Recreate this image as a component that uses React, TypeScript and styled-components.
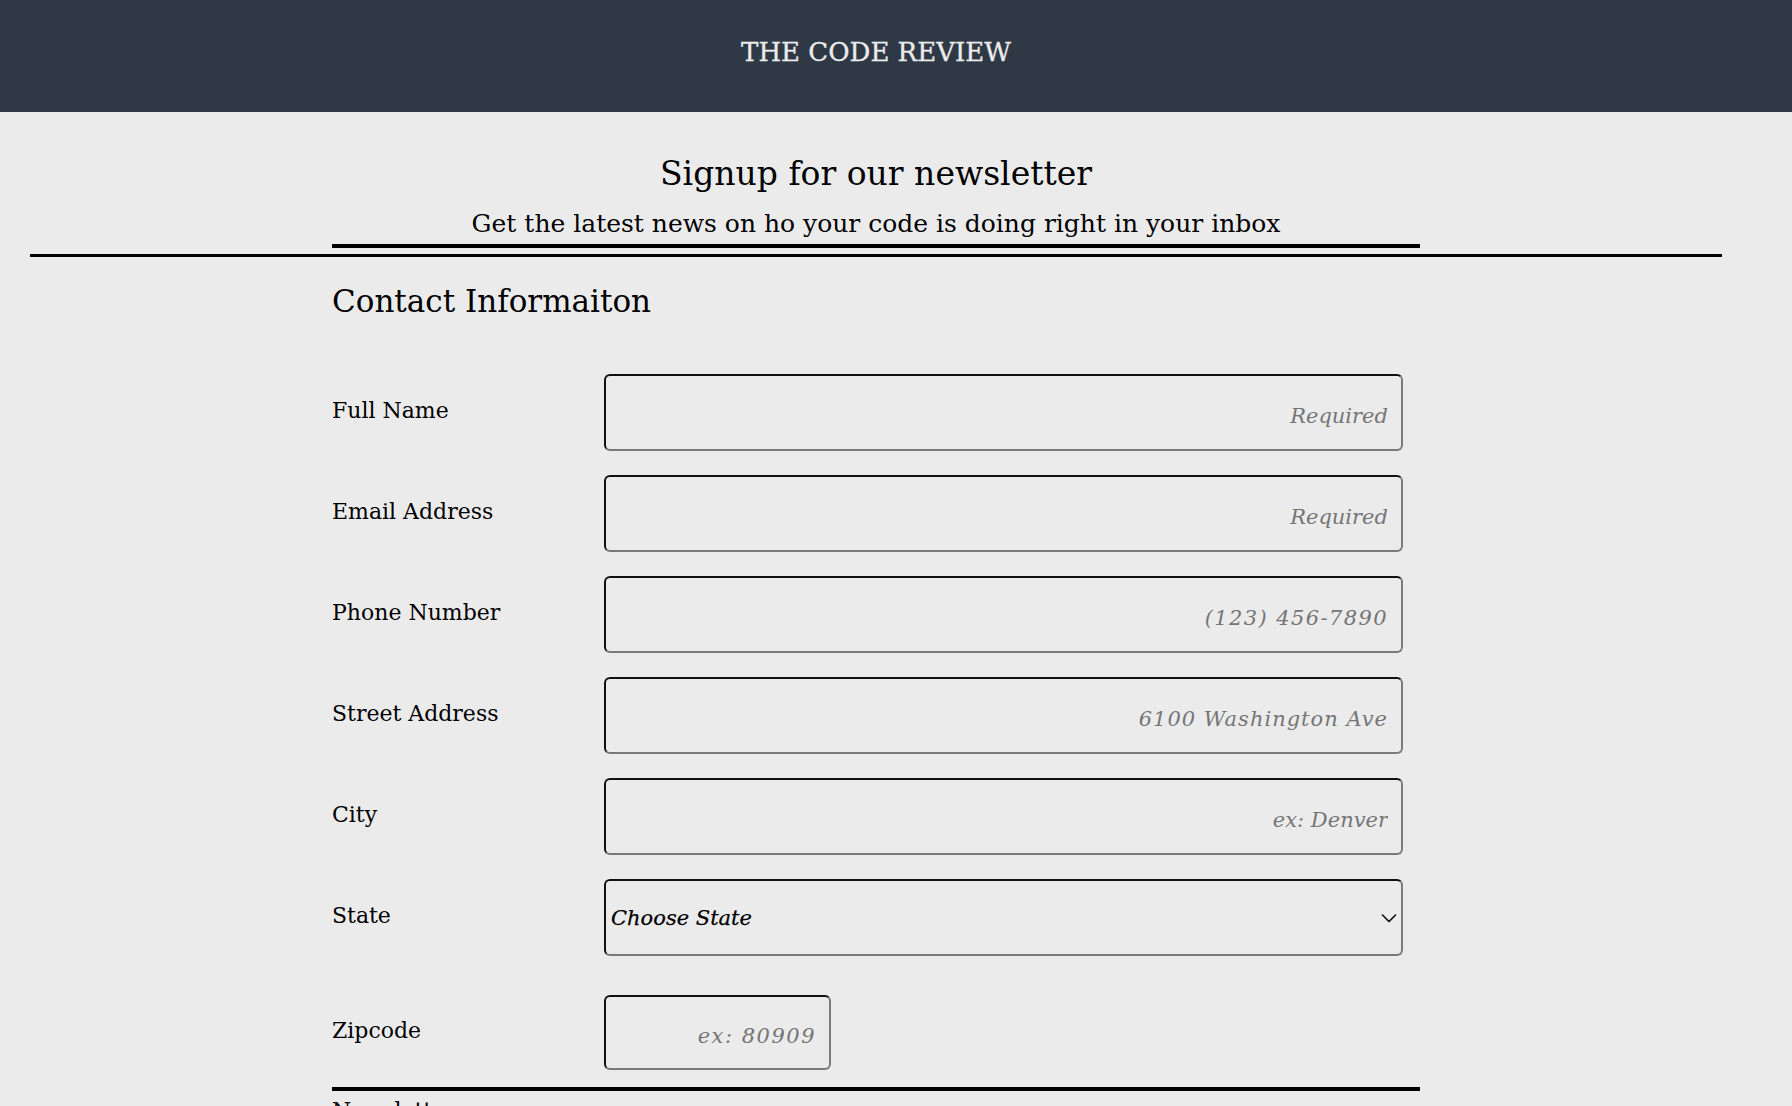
import React from "react";
import styled, { createGlobalStyle } from "styled-components";

const GlobalStyle = createGlobalStyle`
  html, body { margin: 0; padding: 0; background: #ecebec; }
  body { font-family: "DejaVu Serif", "Liberation Serif", serif; color: #000; }
  * { box-sizing: border-box; }
`;

const Header = styled.header`
  height: 112px;
  background: #2f3945;
  padding: 37px 40px 0 0;
  text-align: center;
`;

const SiteTitle = styled.h1`
  margin: 0;
  font-size: 26px;
  line-height: 30px;
  font-weight: normal;
  color: #ececec;
  -webkit-text-stroke: 0.3px #ececec;
`;

const Main = styled.main`
  display: flex;
  flex-direction: column;
  align-items: center;
  padding-right: 40px;
`;

const Intro = styled.section`
  width: 1088px;
  padding: 42px 0 6px;
  border-bottom: 4px solid #000;
  text-align: center;
`;

const Heading = styled.h2`
  margin: 0;
  font-size: 33px;
  line-height: 40px;
  font-weight: normal;
`;

const Subtitle = styled.p`
  margin: 16px 0 0;
  font-size: 25px;
  line-height: 28px;
`;

const Divider = styled.hr`
  width: 1692px;
  height: 3px;
  margin: 6px 0 0;
  border: 0;
  background: #000;
`;

const Form = styled.form`
  width: 1088px;
`;

const SectionTitle = styled.h3`
  margin: 26px 0 0;
  font-size: 31px;
  line-height: 36px;
  font-weight: normal;
`;

const Fields = styled.div`
  display: flex;
  flex-direction: column;
  gap: 24px;
  margin-top: 55px;
`;

const Row = styled.div<{ $short?: boolean }>`
  display: grid;
  grid-template-columns: 272px 1fr;
  align-items: center;
  height: ${(p) => (p.$short ? "75px" : "77px")};
  margin-top: ${(p) => (p.$short ? "15px" : "0")};
`;

const Label = styled.label`
  font-size: 22px;
  line-height: 26px;
  padding-bottom: 4px;
`;

const boxBorder = `
  border: 2px solid;
  border-color: #111 #7a7a7a #7a7a7a #111;
  border-radius: 6px;
  background: transparent;
  font-family: "DejaVu Serif", "Liberation Serif", serif;
  font-style: italic;
  font-size: 21px;
  outline: none;
`;

const Input = styled.input<{ $width?: number; $spacing?: number }>`
  ${boxBorder}
  width: ${(p) => (p.$width ? `${p.$width}px` : "799px")};
  height: 100%;
  padding: 6px 13px 0;
  text-align: right;
  color: #000;
  letter-spacing: ${(p) => p.$spacing ?? 0}px;
  &::placeholder {
    color: #757575;
    opacity: 1;
  }
`;

const SelectWrap = styled.div`
  position: relative;
  width: 799px;
  height: 100%;
`;

const Select = styled.select`
  ${boxBorder}
  appearance: none;
  -webkit-appearance: none;
  width: 100%;
  height: 100%;
  padding: 0 30px 0 5px;
  color: #000;
  -webkit-text-stroke: 0.25px #000;
`;

const Chevron = styled.svg`
  position: absolute;
  right: 6px;
  top: 50%;
  transform: translateY(-50%);
  pointer-events: none;
`;

const FormRule = styled.div`
  height: 4px;
  margin-top: 17px;
  background: #000;
`;

const SubSection = styled.h4`
  margin: 7px 0 0;
  font-size: 22px;
  line-height: 26px;
  font-weight: normal;
`;

const fields = [
  { id: "name", label: "Full Name", placeholder: "Required", spacing: 0 },
  { id: "email", label: "Email Address", placeholder: "Required", spacing: 0 },
  { id: "phone", label: "Phone Number", placeholder: "(123) 456-7890", spacing: 1.4 },
  { id: "street", label: "Street Address", placeholder: "6100 Washington Ave", spacing: 1 },
  { id: "city", label: "City", placeholder: "ex: Denver", spacing: 0 },
];

export default function App() {
  return (
    <>
      <GlobalStyle />
      <Header>
        <SiteTitle>THE CODE REVIEW</SiteTitle>
      </Header>
      <Main>
        <Intro>
          <Heading>Signup for our newsletter</Heading>
          <Subtitle>Get the latest news on ho your code is doing right in your inbox</Subtitle>
        </Intro>
        <Divider />
        <Form onSubmit={(e) => e.preventDefault()}>
          <SectionTitle>Contact Informaiton</SectionTitle>
          <Fields>
            {fields.map((f) => (
              <Row key={f.id}>
                <Label htmlFor={f.id}>{f.label}</Label>
                <Input id={f.id} type="text" placeholder={f.placeholder} $spacing={f.spacing} />
              </Row>
            ))}
            <Row>
              <Label htmlFor="state">State</Label>
              <SelectWrap>
                <Select id="state" defaultValue="">
                  <option value="">Choose State</option>
                  <option value="CO">Colorado</option>
                </Select>
                <Chevron width="16" height="9" viewBox="0 0 16 9" fill="none">
                  <path d="M1 1l7 7 7-7" stroke="#111" strokeWidth="1.6" />
                </Chevron>
              </SelectWrap>
            </Row>
            <Row $short>
              <Label htmlFor="zip">Zipcode</Label>
              <Input id="zip" type="text" $width={227} $spacing={1.5} placeholder="ex: 80909" />
            </Row>
          </Fields>
          <FormRule />
          <SubSection>Newsletter</SubSection>
        </Form>
      </Main>
    </>
  );
}
